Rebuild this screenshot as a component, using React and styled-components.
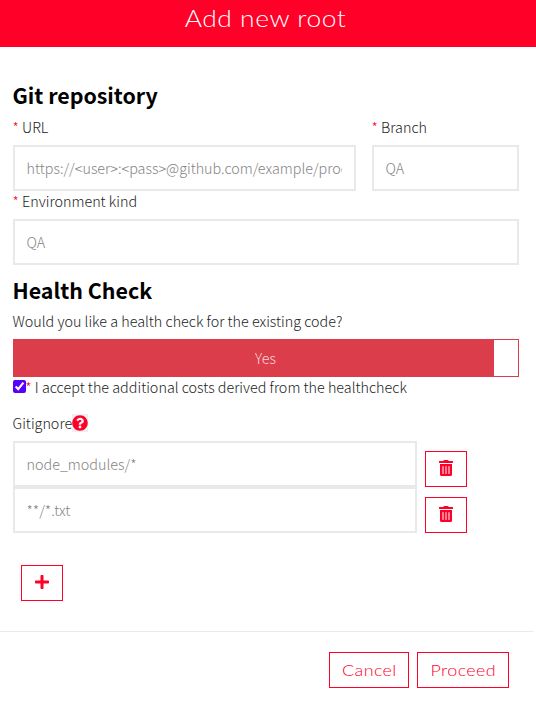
import React from 'react';
import styled, { createGlobalStyle } from 'styled-components';
import { FaTrashAlt, FaPlus, FaQuestionCircle } from 'react-icons/fa';

const RED = '#ff0029';
const BODY_FONT = '"Noto Sans CJK SC", "Noto Sans", sans-serif';

const GlobalStyle = createGlobalStyle`
  *, *::before, *::after { box-sizing: border-box; }
  body { margin: 0; background: #fff; overflow: hidden; }
  svg { display: block; }
`;

const Modal = styled.div`
  width: 536px;
  height: 704px;
  font-family: ${BODY_FONT};
  font-size: 14.35px;
  font-weight: 300;
  color: #222;
`;

const Header = styled.header`
  height: 47px;
  padding-right: 5px;
  background: ${RED};
  color: #fff;
  text-align: center;
  font-family: Lato, sans-serif;
  font-size: 24px;
  font-weight: 300;
  line-height: 36px;
  letter-spacing: 0.5px;
`;

const WideText = styled.span`
  display: inline-block;
  transform: scaleX(${({ $scale }) => $scale});
`;

const Form = styled.form`
  height: 584px;
  padding: 34px 17px 0 13px;
`;

const Heading = styled.h2`
  margin: 0 0 0 -0.5px;
  height: ${({ $height }) => $height}px;
  padding-top: ${({ $top }) => $top}px;
  font-size: 21.4px;
  font-weight: 700;
  line-height: 28px;
  color: #000;
`;

const Label = styled.label`
  display: block;
  height: 28px;
  margin-left: -0.5px;
  line-height: 20px;
  white-space: nowrap;
`;

const Required = styled.span`
  color: ${RED};
`;

const TextInput = styled.input`
  display: block;
  width: 100%;
  height: 46px;
  margin: 0;
  padding: 0 12px 2px 11.5px;
  border: 2px solid #e9e9e9;
  border-radius: 0;
  background: #fff;
  font: inherit;
  color: #333;
  &::placeholder { color: #848484; opacity: 1; }
`;

const FieldGrid = styled.div`
  display: grid;
  grid-template-columns: 343px 147px;
  column-gap: 16px;
`;

const Toggle = styled.div`
  display: flex;
  height: 38px;
  border: 1px solid #dc3d4b;
`;

const ToggleOn = styled.div`
  flex: 1;
  padding-left: 23px;
  background: #dc3d4b;
  color: #f7d9dc;
  line-height: 35px;
  text-align: center;
`;

const ToggleHandle = styled.div`
  width: 24px;
  background: #fff;
`;

const CheckRow = styled.label`
  display: flex;
  height: 36px;
  line-height: 20px;
  white-space: pre;
`;

const Checkbox = styled.input`
  width: 13px;
  height: 13px;
  margin: 3px -0.7px 0 0;
  accent-color: #5600ff;
`;

const IgnoreLabel = styled.div`
  display: flex;
  height: 28px;
  line-height: 20px;
`;

const IgnoreText = styled.span`
  width: 59px;
  margin-left: -0.5px;
  margin-right: 0.5px;
`;

const HelpButton = styled.button`
  width: 16px;
  height: 18px;
  margin-top: 1px;
  padding: 1px 0;
  border: 0;
  background: #efefef;
  color: ${RED};
  font-size: 16px;
`;

const IgnoreRow = styled.div`
  display: grid;
  grid-template-columns: 404px 42px;
  column-gap: 8px;
  align-items: end;
`;

const Button = styled.button`
  display: flex;
  align-items: center;
  justify-content: center;
  width: ${({ $width }) => $width || 42}px;
  height: 36px;
  padding: 0 0 2px;
  border: 1px solid ${RED};
  background: #fff;
  color: ${RED};
  font-family: Lato, sans-serif;
  font-size: 16px;
  font-weight: 300;
  letter-spacing: 0.35px;
`;

const AddRow = styled.div`
  padding: 32px 8px 0;
`;

const Footer = styled.footer`
  display: flex;
  justify-content: flex-end;
  gap: 8px;
  width: 533px;
  padding: 20px 24px 0 0;
  border-top: 1px solid #eaeaea;
`;

function Field({ label, placeholder }) {
  return (
    <div>
      <Label><Required>*</Required> {label}</Label>
      <TextInput placeholder={placeholder} />
    </div>
  );
}

export default function App() {
  return (
    <>
      <GlobalStyle />
      <Modal>
        <Header><WideText $scale={1.1}>Add new root</WideText></Header>
        <Form>
          <Heading $height={36} $top={0}>Git repository</Heading>
          <FieldGrid>
            <Field label="URL" placeholder="https://<user>:<pass>@github.com/example/product.git" />
            <Field label="Branch" placeholder="QA" />
          </FieldGrid>
          <Field label="Environment kind" placeholder="QA" />
          <Heading $height={46} $top={11}>Health Check</Heading>
          <Label>Would you like a health check for the existing code?</Label>
          <Toggle>
            <ToggleOn>Yes</ToggleOn>
            <ToggleHandle />
          </Toggle>
          <CheckRow>
            <Checkbox type="checkbox" defaultChecked />
            <Required>*</Required> I accept the additional costs derived from the healthcheck
          </CheckRow>
          <IgnoreLabel>
            <IgnoreText>Gitignore</IgnoreText>
            <HelpButton type="button" aria-label="Help"><FaQuestionCircle /></HelpButton>
          </IgnoreLabel>
          {['node_modules/*', '**/*.txt'].map((pattern) => (
            <IgnoreRow key={pattern}>
              <TextInput placeholder={pattern} />
              <Button type="button" aria-label="Remove"><FaTrashAlt size={16} /></Button>
            </IgnoreRow>
          ))}
          <AddRow>
            <Button type="button" aria-label="Add"><FaPlus size={16} /></Button>
          </AddRow>
        </Form>
        <Footer>
          <Button $width={80}><WideText $scale={1.12}>Cancel</WideText></Button>
          <Button $width={92}><WideText $scale={1.12}>Proceed</WideText></Button>
        </Footer>
      </Modal>
    </>
  );
}
